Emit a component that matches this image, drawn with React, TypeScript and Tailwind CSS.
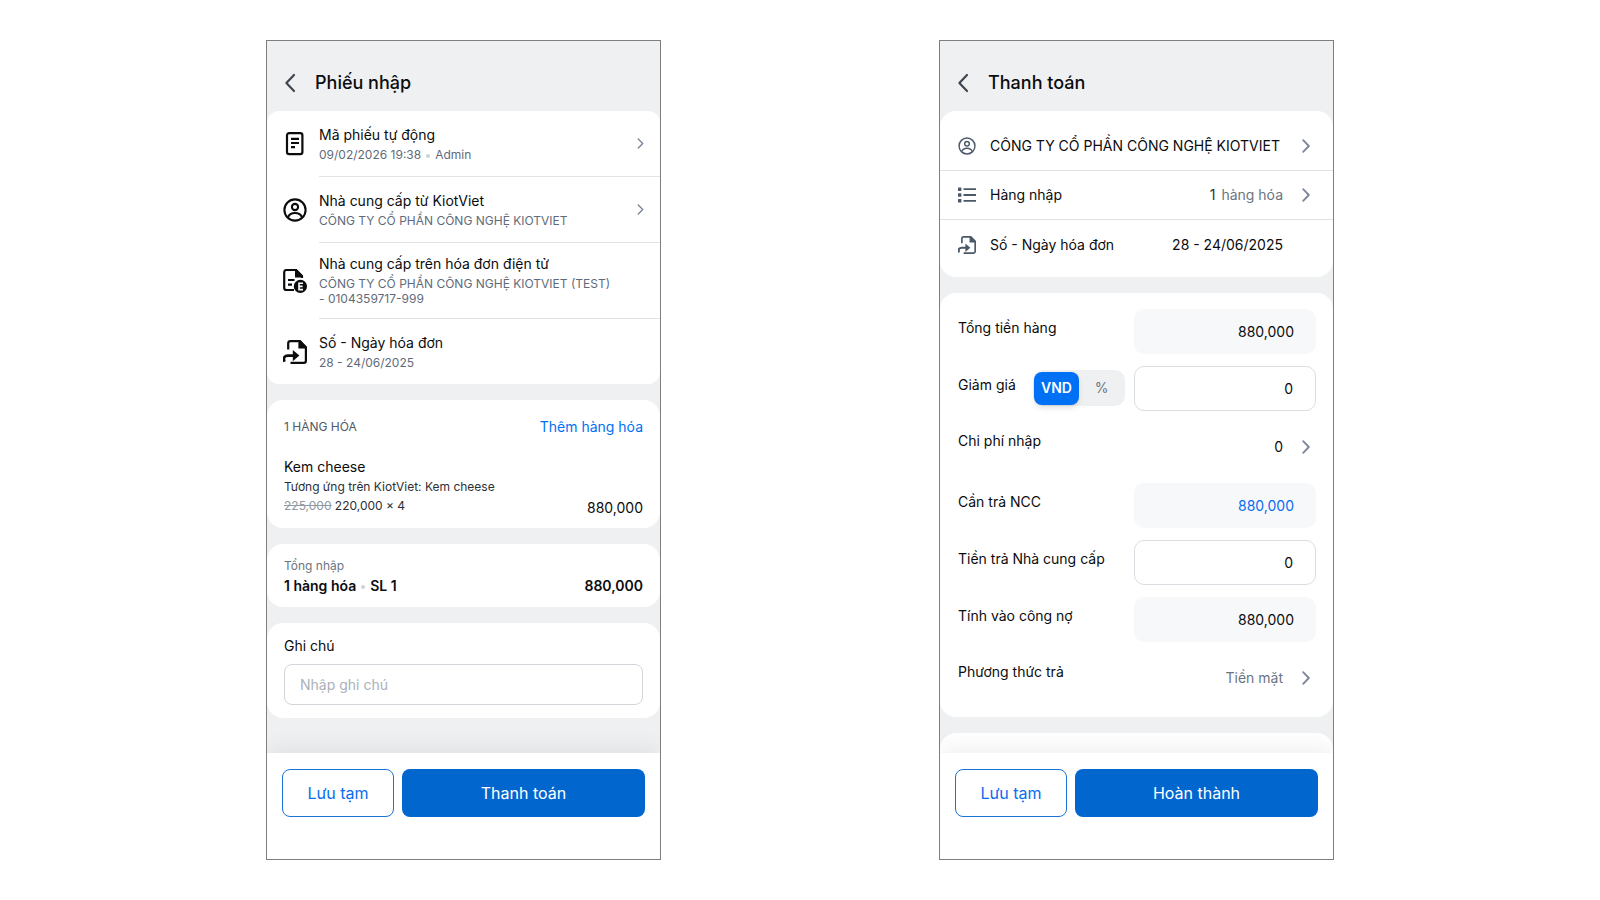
import { useState, type ReactNode } from 'react';

/* ---------- icons ---------- */

function ChevronLeft() {
  return (
    <svg className="h-5 w-3" viewBox="0 0 12 20" fill="none" stroke="#3f4650" strokeWidth="2.2" strokeLinecap="round" strokeLinejoin="round">
      <path d="M10 2 2.4 10 10 18" />
    </svg>
  );
}

function ChevronRight({ large }: { large?: boolean }) {
  return (
    <svg
      className={large ? 'h-[14px] w-2 shrink-0' : 'h-[11px] w-[7px] shrink-0'}
      viewBox="0 0 8 14"
      fill="none"
      stroke="#7b8798"
      strokeWidth="1.8"
      strokeLinecap="round"
      strokeLinejoin="round"
    >
      <path d="M1.2 1.2 6.8 7l-5.6 5.8" />
    </svg>
  );
}

function ReceiptIcon() {
  return (
    <svg className="size-6" viewBox="0 0 24 24" fill="none" stroke="currentColor" strokeWidth="2.2">
      <rect x="4" y="1.2" width="15.4" height="21" rx="2.2" />
      <path d="M8 6.8h8M8 11h8M8 15.2h4" />
    </svg>
  );
}

function UserIcon({ className, width = 2.1 }: { className: string; width?: number }) {
  return (
    <svg className={className} viewBox="0 0 24 24" fill="none" stroke="currentColor" strokeWidth={width}>
      <circle cx="12" cy="12" r="10.6" />
      <circle cx="12" cy="9" r="3.1" />
      <path d="M5 19.4c1-2.9 3.8-4.4 7-4.4s6 1.5 7 4.4" />
    </svg>
  );
}

function EInvoiceIcon() {
  return (
    <svg className="size-6" viewBox="0 0 24 24" fill="none" stroke="currentColor" strokeWidth="2.2">
      <path d="M11 21H3.5a2.300 2.300 0 0 1-2.300-2.300V3.200A2.300 2.300 0 0 1 3.500 1H13l6 6v2" />
      <path d="M12 0h1.500L20 7.200V8.600h-8z" fill="currentColor" stroke="none" />
      <path d="M5 11h6.500M5 15.600h4" />
      <circle cx="17.400" cy="17.400" r="6.600" fill="currentColor" stroke="none" />
      <path d="M20 14.200h-4v6.400h4M16 17.400h3.600" stroke="#fff" strokeWidth="1.600" />
    </svg>
  );
}

function ExportIcon({ className }: { className: string }) {
  return (
    <svg className={className} viewBox="0 0 24 24" fill="none" stroke="currentColor" strokeWidth="2.2">
      <path d="M5.200 9.500V3.200A2.200 2.200 0 0 1 7.400 1.100H17l5.900 6v13.600a2.200 2.200 0 0 1-2.200 2.200H7.500" />
      <path d="M15.400 0.400H17l7 7v1.200h-8.600z" fill="currentColor" stroke="none" />
      <path d="M1.400 21.800c-1.400-4.200.2-6.200 3.600-6.200h6" strokeWidth="2.800" />
      <path d="M9.800 10 16.400 15.600l-6.600 5.600z" fill="currentColor" stroke="none" />
    </svg>
  );
}

function ListIcon() {
  return (
    <svg className="size-[18px]" viewBox="0 0 18 18" fill="currentColor">
      <rect x="0" y="1.500" width="3.400" height="3.400" rx=".5" />
      <rect x="0" y="7.300" width="3.400" height="3.400" rx=".5" />
      <rect x="0" y="13.100" width="3.400" height="3.400" rx=".5" />
      <path d="M5.500 2.200H18V4H5.500zM5.500 8.100H18v1.800H5.500zM5.500 14H18v1.800H5.500z" />
    </svg>
  );
}

/* ---------- shared pieces ---------- */

function Phone({ title, action, children }: { title: string; action: string; children: ReactNode }) {
  return (
    <section className="flex w-full max-w-[395px] flex-col overflow-hidden border border-[#7d7e80] bg-[#eff0f2]">
      <header className="flex h-[70px] items-center gap-[19px] px-[17px] pt-[13px]">
        <button type="button" aria-label="Quay lại">
          <ChevronLeft />
        </button>
        <h1 className="text-lg font-medium">{title}</h1>
      </header>
      <div className="flex grow flex-col gap-4">{children}</div>
      <footer className="relative flex gap-2 bg-white px-[15px] pt-4 pb-[42px] shadow-[0_-6px_20px_rgba(0,0,0,0.06)]">
        <button type="button" className="h-12 w-28 rounded-lg border border-[#1a73d6] text-base text-[#0a6cf0]">
          Lưu tạm
        </button>
        <button type="button" className="h-12 grow rounded-lg bg-[#0266cf] text-base text-white">
          {action}
        </button>
      </footer>
    </section>
  );
}

function Dot() {
  return <span className="mx-[5px] inline-block size-1 rounded-full bg-[#cfd3d8] align-middle" />;
}

/* ---------- receipt screen ---------- */

type InfoProps = { icon: ReactNode; title: string; children: ReactNode; arrow?: boolean; last?: boolean; tall?: boolean };

function InfoRow({ icon, title, children, arrow, last, tall }: InfoProps) {
  return (
    <div className="flex gap-3 pl-4">
      <div className="flex items-center">{icon}</div>
      <div className={`flex grow items-center justify-between border-[#e1e3e6] pr-4 ${last ? '' : 'border-b'} ${tall ? 'pt-[11px] pb-3' : 'py-[14px]'}`}>
        <div>
          <h2 className="text-sm leading-5">{title}</h2>
          <p className="mt-[2px] max-w-[296px] text-xs leading-[15px] text-[#5f6b7a]">{children}</p>
        </div>
        {arrow && <ChevronRight />}
      </div>
    </div>
  );
}

function ReceiptScreen() {
  return (
    <Phone title="Phiếu nhập" action="Thanh toán">
      <div className="rounded-xl bg-white">
        <InfoRow icon={<ReceiptIcon />} title="Mã phiếu tự động" arrow>
          09/02/2026 19:38
          <Dot />
          Admin
        </InfoRow>
        <InfoRow icon={<UserIcon className="size-6" />} title="Nhà cung cấp từ KiotViet" arrow>
          CÔNG TY CỔ PHẦN CÔNG NGHỆ KIOTVIET
        </InfoRow>
        <InfoRow icon={<EInvoiceIcon />} title="Nhà cung cấp trên hóa đơn điện tử" tall>
          CÔNG TY CỔ PHẦN CÔNG NGHỆ KIOTVIET (TEST) - 0104359717-999
        </InfoRow>
        <InfoRow icon={<ExportIcon className="size-6" />} title="Số - Ngày hóa đơn" last>
          28 - 24/06/2025
        </InfoRow>
      </div>

      <div className="rounded-2xl bg-white px-[17px] pt-[15px] pb-[10px]">
        <div className="flex items-center justify-between">
          <h2 className="text-xs leading-6 text-[#4d5966]">1 HÀNG HÓA</h2>
          <a href="#them" className="text-sm leading-6 text-[#0070f4]">
            Thêm hàng hóa
          </a>
        </div>
        <div className="mt-[18px] flex items-end justify-between">
          <div className="pb-1">
            <h3 className="text-sm leading-5">Kem cheese</h3>
            <p className="mt-[2px] text-xs leading-4 text-[#2b3036]">Tương ứng trên KiotViet: Kem cheese</p>
            <p className="mt-[3px] text-xs leading-4 text-[#2b3036]">
              <s className="text-[#8f98a3]">225,000</s> 220,000 × 4
            </p>
          </div>
          <span className="text-sm leading-5">880,000</span>
        </div>
      </div>

      <div className="flex items-end justify-between rounded-2xl bg-white px-[17px] pt-[14px] pb-[11px]">
        <div>
          <p className="text-xs leading-4 text-[#6b7582]">Tổng nhập</p>
          <p className="mt-[2px] text-sm leading-5 font-semibold">
            1 hàng hóa
            <Dot />
            SL 1
          </p>
        </div>
        <span className="text-sm leading-5 font-semibold">880,000</span>
      </div>

      <div className="mb-[35px] rounded-2xl bg-white px-[17px] py-[13px]">
        <label htmlFor="note" className="block text-sm leading-5">
          Ghi chú
        </label>
        <input
          id="note"
          placeholder="Nhập ghi chú"
          className="mt-2 h-[41px] w-full rounded-lg border border-[#d2d5da] px-[15px] text-sm outline-none placeholder:text-[#abb1ba]"
        />
      </div>
    </Phone>
  );
}

/* ---------- payment screen ---------- */

function SummaryRow({ icon, label, value, arrow }: { icon: ReactNode; label: string; value?: ReactNode; arrow?: boolean }) {
  return (
    <div className="flex h-[49px] items-center border-b border-[#dfe1e4] pr-[23px] pl-[18px] text-sm last:border-b-0">
      <span className="mr-[14px] text-[#4b5868]">{icon}</span>
      <span className="grow">{label}</span>
      {value}
      <span className="ml-[19px] flex w-2">{arrow && <ChevronRight large />}</span>
    </div>
  );
}

const fieldBase = 'h-[45px] w-[182px] rounded-[10px] pr-[22px] text-right text-sm outline-none';

function Field({ id, label, value, tone = 'edit', children }: { id: string; label: string; value: string; tone?: 'edit' | 'locked' | 'due'; children?: ReactNode }) {
  const tones = {
    edit: 'border border-[#dadde2] bg-white',
    locked: 'bg-[#f7f8fa]',
    due: 'bg-[#f7f8fa] text-[#0a6cf0]',
  };
  return (
    <div className="flex">
      <label htmlFor={id} className="grow pt-[9px] leading-5">
        {label}
      </label>
      {children}
      <input id={id} defaultValue={value} readOnly={tone !== 'edit'} className={`${fieldBase} ${tones[tone]}`} />
    </div>
  );
}

function LinkRow({ label, value, muted }: { label: string; value: string; muted?: boolean }) {
  return (
    <button type="button" className="flex h-12 w-full items-center pr-[6px] text-left">
      <span className="grow self-start pt-2 leading-5">{label}</span>
      <span className={muted ? 'text-[#6b7582]' : ''}>{value}</span>
      <span className="ml-[19px] flex w-2">
        <ChevronRight large />
      </span>
    </button>
  );
}

function UnitToggle() {
  const [unit, setUnit] = useState('VND');
  const on = 'bg-[#0070f4] font-semibold text-white shadow-md';
  const off = 'text-[#6b7582]';
  return (
    <div className="mt-1 mr-[9px] flex h-9 items-center rounded-[10px] bg-[#eff0f2] px-px">
      <button type="button" onClick={() => setUnit('VND')} className={`h-[33px] w-[45px] rounded-lg text-sm ${unit === 'VND' ? on : off}`}>
        VND
      </button>
      <button type="button" onClick={() => setUnit('%')} className={`h-[33px] w-[45px] rounded-lg text-sm ${unit === '%' ? on : off}`}>
        %
      </button>
    </div>
  );
}

function PaymentScreen() {
  return (
    <Phone title="Thanh toán" action="Hoàn thành">
      <div className="rounded-2xl bg-white pt-[11px] pb-2">
        <SummaryRow icon={<UserIcon className="size-[18px]" width={1.9} />} label="CÔNG TY CỔ PHẦN CÔNG NGHỆ KIOTVIET" arrow />
        <SummaryRow
          icon={<ListIcon />}
          label="Hàng nhập"
          value={
            <span className="text-[#6b7582]">
              <span className="mr-[6px] text-[#2b3036]">1</span>hàng hóa
            </span>
          }
          arrow
        />
        <SummaryRow icon={<ExportIcon className="size-[18px]" />} label="Số - Ngày hóa đơn" value="28 - 24/06/2025" />
      </div>

      <div className="flex flex-col gap-3 rounded-2xl bg-white pt-4 pr-[17px] pb-[15px] pl-[18px] text-sm">
        <Field id="total" label="Tổng tiền hàng" value="880,000" tone="locked" />
        <Field id="discount" label="Giảm giá" value="0">
          <UnitToggle />
        </Field>
        <LinkRow label="Chi phí nhập" value="0" />
        <Field id="due" label="Cần trả NCC" value="880,000" tone="due" />
        <Field id="paid" label="Tiền trả Nhà cung cấp" value="0" />
        <Field id="debt" label="Tính vào công nợ" value="880,000" tone="locked" />
        <LinkRow label="Phương thức trả" value="Tiền mặt" muted />
      </div>

      <div className="grow rounded-t-2xl bg-white" />
    </Phone>
  );
}

export default function App() {
  return (
    <main className="min-h-screen bg-white px-4 py-10 font-[Inter,sans-serif] text-[#0b0c0e]">
      <div className="mx-auto flex max-w-[1068px] justify-between gap-8">
        <ReceiptScreen />
        <PaymentScreen />
      </div>
    </main>
  );
}
